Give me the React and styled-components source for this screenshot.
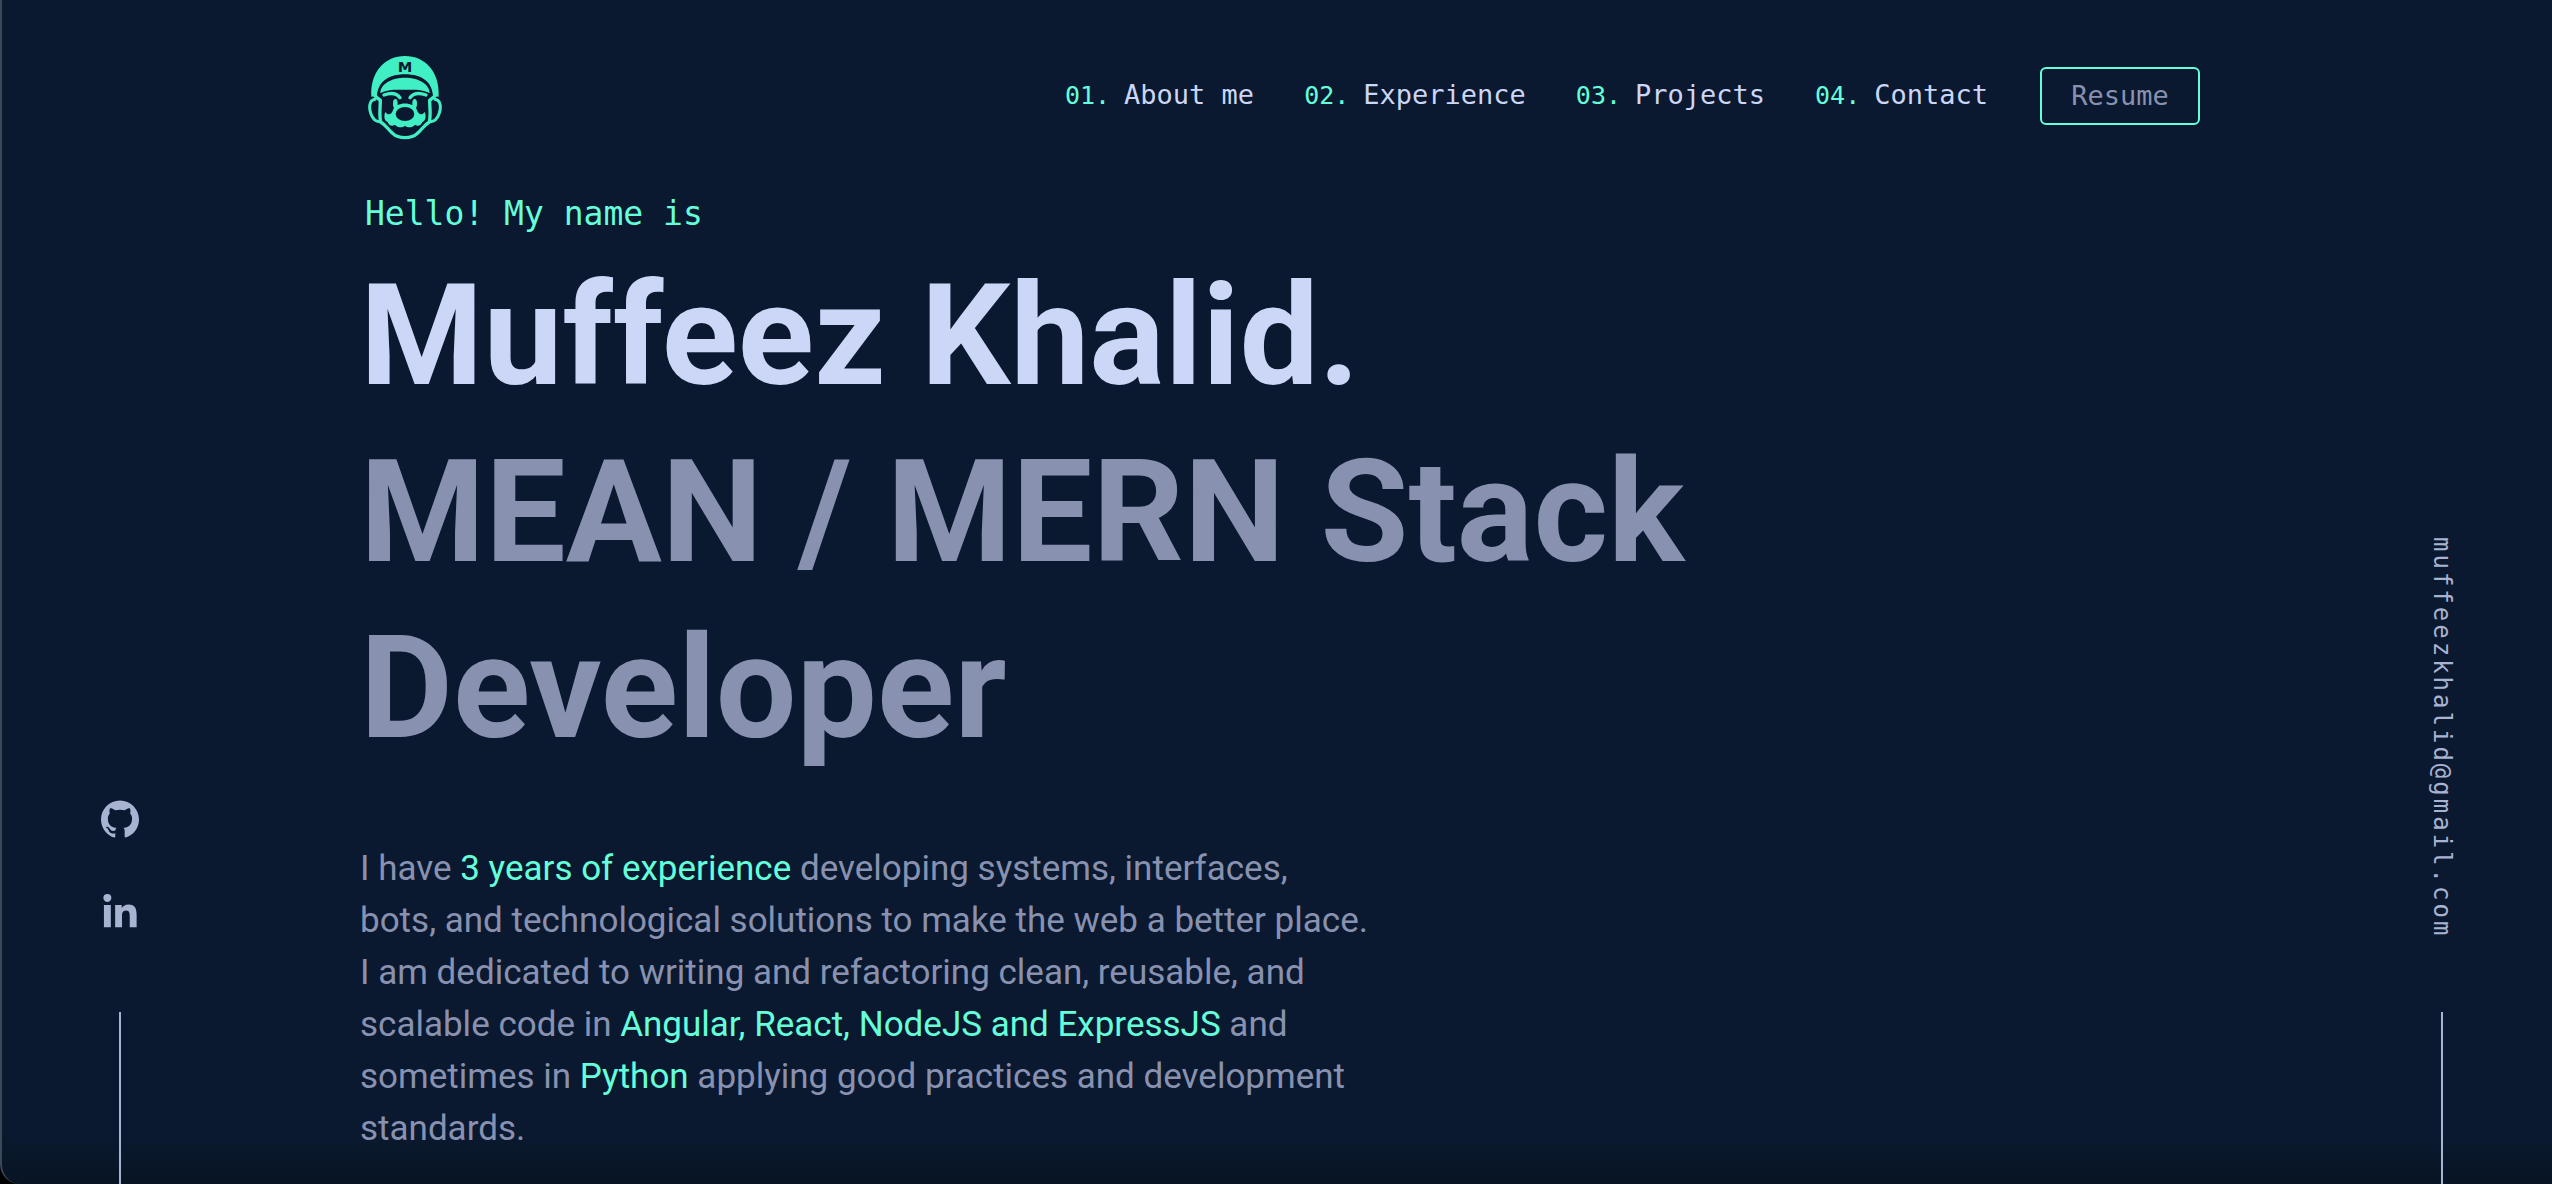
import React from "react";
import styled, { createGlobalStyle } from "styled-components";
import { SiGithub } from "react-icons/si";
import { FaLinkedinIn } from "react-icons/fa";

const navy = "#0a192f";
const green = "#64ffda";
const white = "#ccd6f6";
const lightSlate = "#a8b2d1";
const slate = "#8892b0";
const mono = `"DejaVu Sans Mono", "Liberation Mono", monospace`;
const sans = `Roboto, "Liberation Sans", sans-serif`;

const GlobalStyle = createGlobalStyle`
  *, *::before, *::after { box-sizing: border-box; }
  html { background: #000; }
  body { margin: 0; font-family: ${sans}; color: ${slate}; }
  a { color: inherit; text-decoration: none; }
`;

const Page = styled.div`
  display: grid;
  grid-template-columns: 236px minmax(0, 1fr) 220px;
  height: 100vh;
  overflow: hidden;
  border-left: 2px solid #3c4757;
  border-bottom-left-radius: 20px;
  background: linear-gradient(to top, #081424 0, ${navy} 48px);
`;

const Rail = styled.aside`
  display: flex;
  flex-direction: column;
  justify-content: flex-end;
  align-items: center;
  color: ${lightSlate};

  &::after {
    content: "";
    width: 2px;
    height: 172px;
    background: ${lightSlate};
  }
`;

const SocialList = styled.ul`
  display: flex;
  flex-direction: column;
  align-items: center;
  gap: 56px;
  list-style: none;
  margin: 0 0 80px;
  padding: 0;
`;

const SocialLink = styled.a`
  display: block;

  svg { display: block; width: 38px; height: 38px; }
`;

const Email = styled.a`
  writing-mode: vertical-rl;
  margin-bottom: 74px;
  font: 24px/28px ${mono};
  letter-spacing: 3px;
`;

const Main = styled.div`
  padding: 0 132px 0 122px;
`;

const Header = styled.header`
  display: flex;
  justify-content: space-between;
  align-items: flex-start;
  padding-top: 56px;
`;

const LogoLink = styled.a`
  margin-left: 8px;

  svg { display: block; width: 74px; height: 84px; }
`;

const Nav = styled.nav`
  display: flex;
  align-items: center;
  gap: 52px;
  padding-top: 11px;
`;

const NavList = styled.ol`
  display: flex;
  gap: 50px;
  list-style: none;
  margin: 0;
  padding: 0 0 2px;
`;

const NavLink = styled.a`
  display: flex;
  align-items: baseline;
  gap: 14px;
  color: ${white};
  font: 27px/32px ${mono};
`;

const Index = styled.span`
  color: ${green};
  font-size: 25px;
`;

const ResumeButton = styled.button`
  height: 58px;
  width: 160px;
  padding: 0;
  border: 2px solid ${green};
  border-radius: 6px;
  background: transparent;
  color: ${slate};
  font: 27px/32px ${mono};
`;

const Greeting = styled.p`
  margin: 54px 0 0 5px;
  color: ${green};
  font: 33px/40px ${mono};
`;

const Title = styled.h1`
  margin: 14px 0 0;
  color: ${white};
  font: 700 141px/176px ${sans};
`;

const Subtitle = styled.h2`
  max-width: 1500px;
  margin: 0;
  color: ${slate};
  font: 700 143px/176px ${sans};
`;

const Intro = styled.p`
  max-width: 1020px;
  margin: 67px 0 0;
  font: 35px/52px ${sans};
`;

const Accent = styled.span`
  color: ${green};
`;

const links = ["About me", "Experience", "Projects", "Contact"];

function Logo() {
  return (
    <svg viewBox="54 48 222 252" aria-hidden="true">
      <g fill="#40f0c4">
        <path d="M64 170 C60 95 105 48 165 48 S270 95 266 170 L249 167 C246 128 218 103 165 103 S84 128 81 167 Z" />
        <path d="M91 160 C91 130 128 113 165 113 S239 130 239 160 C230 154 214 150 200 149 H131 C116 150 100 154 91 160 Z" />
      </g>
      <text x="165" y="97" textAnchor="middle" fill={navy} fontFamily="DejaVu Sans" fontWeight="700" fontSize="44">M</text>
      <g fill="none" stroke="#40f0c4" strokeWidth="9" strokeLinecap="round" strokeLinejoin="round">
        <path strokeWidth="10" d="M75 168 L91 181 C91 205 87 222 92 246 C110 257 115 270 128 280 C145 297 185 297 202 280 C215 270 220 257 238 246 C243 222 239 205 239 181 L255 168" />
        <path d="M75 178 C57 180 56 204 63 222 C68 236 78 245 89 245" />
        <path d="M255 178 C273 180 274 204 267 222 C262 236 252 245 241 245" />
        <path strokeWidth="10" d="M102 165 C124 157 141 161 150 173" />
        <path strokeWidth="10" d="M228 165 C206 157 189 161 180 173" />
      </g>
      <g fill="#40f0c4">
        <ellipse cx="136" cy="191" rx="7" ry="14" />
        <ellipse cx="194" cy="191" rx="7" ry="14" />
        <path d="M106 216 C115 229 126 222 129 210 C138 184 192 184 201 210 C204 222 215 229 224 216 C230 230 226 244 217 246 C214 257 203 260 195 254 C187 264 173 264 165 257 C157 264 143 264 135 254 C127 260 116 257 113 246 C104 244 100 230 106 216 Z" />
      </g>
      <ellipse cx="165" cy="222" rx="28" ry="21" fill={navy} />
    </svg>
  );
}

export default function App() {
  return (
    <>
      <GlobalStyle />
      <Page>
        <Rail>
          <SocialList>
            <li><SocialLink href="#github" aria-label="GitHub"><SiGithub /></SocialLink></li>
            <li><SocialLink href="#linkedin" aria-label="LinkedIn"><FaLinkedinIn /></SocialLink></li>
          </SocialList>
        </Rail>
        <Main>
          <Header>
            <LogoLink href="#home" aria-label="Home"><Logo /></LogoLink>
            <Nav>
              <NavList>
                {links.map((label, i) => (
                  <li key={label}>
                    <NavLink href={`#section-${i + 1}`}>
                      <Index>{`0${i + 1}.`}</Index>
                      <span>{label}</span>
                    </NavLink>
                  </li>
                ))}
              </NavList>
              <ResumeButton type="button">Resume</ResumeButton>
            </Nav>
          </Header>
          <main>
            <Greeting>Hello! My name is</Greeting>
            <Title>Muffeez Khalid.</Title>
            <Subtitle>MEAN / MERN Stack Developer</Subtitle>
            <Intro>
              I have <Accent>3 years of experience</Accent> developing systems, interfaces,
              <br />
              bots, and technological solutions to make the web a better place. I am dedicated to
              writing and refactoring clean, reusable, and scalable code in{" "}
              <Accent>Angular, React, NodeJS and ExpressJS</Accent> and sometimes in{" "}
              <Accent>Python</Accent> applying good practices and development standards.
            </Intro>
          </main>
        </Main>
        <Rail>
          <Email href="mailto:muffeezkhalid@gmail.com">muffeezkhalid@gmail.com</Email>
        </Rail>
      </Page>
    </>
  );
}
